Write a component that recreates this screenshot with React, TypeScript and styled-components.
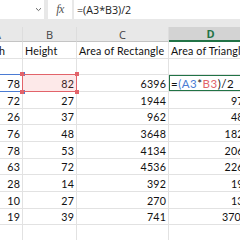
import styled, { createGlobalStyle, css } from "styled-components";

const GlobalStyle = createGlobalStyle`
  html, body {
    margin: 0;
    padding: 0;
    overflow: hidden;
    background: #e8e8e8;
  }
`;

type Ref = "blue" | "red" | "active" | undefined;

const GREEN = "#217346";

const Window = styled.div`
  width: 240px;
  height: 240px;
  background: #e8e8e8;
  display: flex;
  flex-direction: column;
  overflow: hidden;
`;

const FormulaBar = styled.div`
  height: 19px;
  display: flex;
  flex-shrink: 0;
`;

const NameBox = styled.div`
  width: 44px;
  background: #fff;
  display: flex;
  align-items: center;
  justify-content: flex-end;
  padding-right: 2px;
  box-sizing: border-box;
`;

const FxBox = styled.div`
  width: 24px;
  margin-left: 4px;
  background: #fff;
  display: flex;
  align-items: center;
  justify-content: center;
  font-family: "Liberation Serif", serif;
  font-style: italic;
  font-size: 12px;
  color: #555;
  letter-spacing: -0.5px;
`;

const FormulaInput = styled.div`
  flex: 1;
  margin-left: 2px;
  background: #fff;
  display: flex;
  align-items: center;
  padding-left: 3px;
  font-family: "Open Sans", sans-serif;
  font-size: 10.7px;
  color: #222;
  white-space: nowrap;
`;

const Sheet = styled.div`
  margin-top: 8px;
  flex: 1;
  overflow: hidden;
  background: #fff;
`;

const Grid = styled.div`
  display: grid;
  grid-template-columns: 50px 54px 92px 84px;
  grid-template-rows: 15px repeat(12, 16.67px);
  margin-left: -27px;
  width: max-content;
`;

const ColHead = styled.div<{ $selected?: boolean }>`
  background: #e8e8e8;
  border-right: 1px solid #dddddd;
  border-bottom: 1px solid #c4c4c4;
  display: flex;
  align-items: center;
  justify-content: center;
  font-family: "Open Sans", sans-serif;
  font-size: 11px;
  color: #444;
  ${(p) =>
    p.$selected &&
    css`
      background: #d3d3d3;
      color: ${GREEN};
      font-weight: 700;
      border-bottom: 2px solid ${GREEN};
    `}
`;

const refStyles = {
  blue: css`
    border: 1px solid #4b7bd3;
  `,
  red: css`
    border: 1px solid #e2636a;
    background: rgba(240, 120, 120, 0.16);
  `,
  active: css`
    border: 2px solid ${GREEN};
  `,
};

const Cell = styled.div<{ $right?: boolean; $ref?: Ref }>`
  position: relative;
  border-right: 1px solid #e2e2e2;
  border-bottom: 1px solid #e2e2e2;
  display: flex;
  align-items: flex-end;
  justify-content: ${(p) => (p.$right ? "flex-end" : "flex-start")};
  padding: 0 2px 1px 2px;
  font-family: Lato, sans-serif;
  font-size: 10.7px;
  letter-spacing: 0.15px;
  color: #111;
  white-space: nowrap;
  ${(p) => p.$ref === "red" && "z-index: 2;"}
  ${(p) => p.$ref === "blue" && "z-index: 1;"}
  ${(p) => p.$ref === "active" && "z-index: 3; overflow: hidden;"}
  &::after {
    content: "";
    position: absolute;
    inset: -1px -1px -1px -1px;
    pointer-events: none;
    ${(p) => (p.$ref ? refStyles[p.$ref] : "")}
  }
`;

const Handle = styled.span<{ $color: string; $x: "l" | "r"; $y: "t" | "b" }>`
  position: absolute;
  width: 4px;
  height: 4px;
  background: ${(p) => p.$color};
  ${(p) => (p.$x === "l" ? "left: -3px;" : "right: -3px;")}
  ${(p) => (p.$y === "t" ? "top: -3px;" : "bottom: -3px;")}
  z-index: 4;
`;

const FormulaText = styled.span`
  font-size: 11.5px;
  letter-spacing: 0.5px;
`;

const Tok = styled.span<{ $c?: string }>`
  color: ${(p) => p.$c || "inherit"};
`;

const Chevron = () => (
  <svg width="7" height="5" viewBox="0 0 7 5">
    <path d="M1 1.2 L3.5 3.6 L6 1.2" fill="none" stroke="#666" strokeWidth="1" />
  </svg>
);

const Handles = ({ color }: { color: string }) => (
  <>
    <Handle $color={color} $x="l" $y="t" />
    <Handle $color={color} $x="r" $y="t" />
    <Handle $color={color} $x="l" $y="b" />
    <Handle $color={color} $x="r" $y="b" />
  </>
);

const Formula = () => (
  <FormulaText>
    <Tok>=</Tok>
    <Tok $c="#4b7bd3">(A3</Tok>
    <Tok>*</Tok>
    <Tok $c="#e2636a">B3</Tok>
    <Tok>)/2</Tok>
  </FormulaText>
);

const rows: (string | number)[][] = [
  ["Width", "Height", "Area of Rectangle", "Area of Triangle"],
  ["", "", "", ""],
  [78, 82, 6396, "f"],
  [72, 27, 1944, 972],
  [26, 37, 962, 481],
  [76, 48, 3648, 1824],
  [78, 53, 4134, 2067],
  [63, 72, 4536, 2268],
  [28, 14, 392, 196],
  [10, 27, 270, 135],
  [19, 39, 741, 370.5],
  ["", "", "", ""],
];

const refFor = (r: number, c: number): Ref => {
  if (r !== 2) return undefined;
  if (c === 0) return "blue";
  if (c === 1) return "red";
  if (c === 3) return "active";
  return undefined;
};

export default function App() {
  return (
    <>
      <GlobalStyle />
      <Window>
        <FormulaBar>
          <NameBox>
            <Chevron />
          </NameBox>
          <FxBox>fx</FxBox>
          <FormulaInput>=(A3*B3)/2</FormulaInput>
        </FormulaBar>
        <Sheet>
          <Grid>
            {["A", "B", "C", "D"].map((l) => (
              <ColHead key={l} $selected={l === "D"}>
                {l}
              </ColHead>
            ))}
            {rows.map((row, r) =>
              row.map((v, c) => {
                const ref = refFor(r, c);
                return (
                  <Cell key={`${r}-${c}`} $right={typeof v === "number"} $ref={ref}>
                    {ref === "active" ? <Formula /> : v}
                    {ref === "red" && <Handles color="#e2636a" />}
                    {ref === "blue" && <Handles color="#4b7bd3" />}
                  </Cell>
                );
              })
            )}
          </Grid>
        </Sheet>
      </Window>
    </>
  );
}
